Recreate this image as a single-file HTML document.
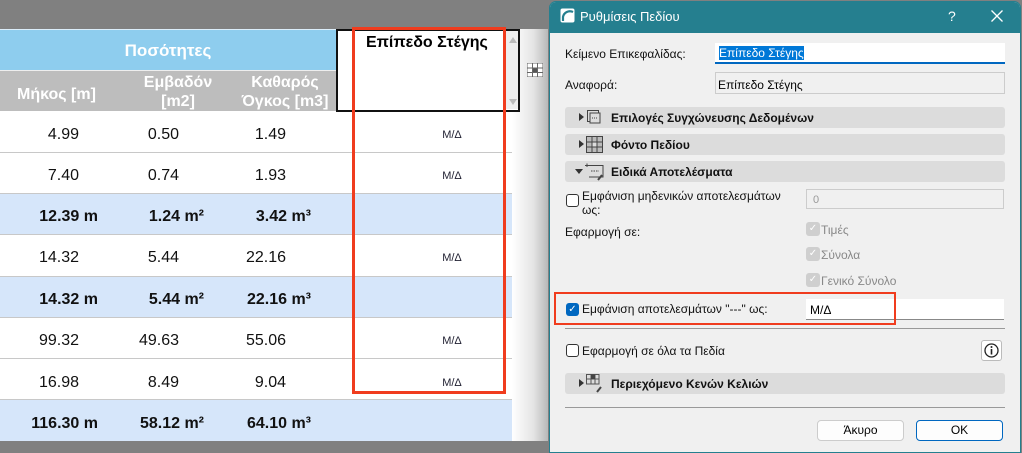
<!DOCTYPE html>
<html><head><meta charset="utf-8"><style>
*{margin:0;padding:0;box-sizing:border-box}
body{width:1022px;height:453px;overflow:hidden;position:relative;background:#808080;font-family:"Liberation Sans",Arial,sans-serif}
.a{position:absolute}
.n{position:absolute;font-size:16px;color:#111;text-align:right}
.b{font-weight:bold}
.row{position:absolute;left:0;width:512px;border-bottom:1px solid #c8c8c8}
.md{position:absolute;left:430px;width:44px;text-align:center;font-size:11px;color:#223}
.dl{font-size:12px;color:#111}
.sec{position:absolute;left:565px;width:440px;height:21px;background:#dcdcdc;border-radius:3px;font-size:12px;font-weight:bold;color:#111}
.sec .t{position:absolute;left:14px;top:6px;width:0;height:0;border-top:4px solid transparent;border-bottom:4px solid transparent;border-left:5px solid #333}
.sec .dn{position:absolute;left:10px;top:8px;border-left:4px solid transparent;border-right:4px solid transparent;border-top:5px solid #333}
.sec span{position:absolute;left:46px;top:4px}
.cb{position:absolute;width:13px;height:13px;border:1px solid #333;border-radius:3px;background:#fff}
.cbd{position:absolute;width:14px;height:14px;border-radius:3px;background:#cfcfcf;color:#fff;font-size:10px;text-align:center;line-height:14px}
.inp{position:absolute;background:#fff;border-bottom:1px solid #888;font-size:12px}
</style></head><body>
<!-- table area -->
<div class="a" style="left:0;top:29px;width:512px;height:412px;background:#fff"></div>
<div class="a" style="left:512px;top:29px;width:36px;height:412px;background:linear-gradient(90deg,#fff,#e4e4e4 60%,#b8b8b8)"></div>
<div class="a" style="left:0;top:29px;width:336px;height:41px;background:#8ecdee;color:#fff;font-weight:bold;font-size:17px;text-align:center;line-height:41px;border-top:1px solid #dceefa">Ποσότητες</div>
<div class="a" style="left:0;top:70px;width:336px;height:41px;background:#bdbdbd;border-top:1px solid #eee"></div>
<div class="a" style="left:17px;top:86px;color:#fff;font-weight:bold;font-size:16px">Μήκος [m]</div>
<div class="a" style="left:138px;top:73px;color:#fff;font-weight:bold;font-size:16px;text-align:center;width:80px;line-height:19px">Εμβαδόν<br>[m2]</div>
<div class="a" style="left:240px;top:73px;color:#fff;font-weight:bold;font-size:16px;text-align:center;width:90px;line-height:19px">Καθαρός<br>Όγκος [m3]</div>
<div class="a" style="left:336px;top:29px;width:184px;height:83px;border:2px solid #111;background:#fff"></div>
<div class="a" style="left:366px;top:34px;font-weight:bold;font-size:16px;color:#000">Επίπεδο Στέγης</div>
<div class="a" style="left:504px;top:31px;width:14px;height:78px;background:#eee"></div>
<div class="a" style="left:509px;top:37px;border-left:4px solid transparent;border-right:4px solid transparent;border-bottom:6px solid #bbb"></div>
<div class="a" style="left:509px;top:99px;border-left:4px solid transparent;border-right:4px solid transparent;border-top:6px solid #bbb"></div>
<svg class="a" style="left:527px;top:63px" width="16" height="14"><rect x="0" y="0" width="16" height="14" fill="#fff" stroke="#666"/><path d="M0 5H16M0 9.5H16M5.5 0V14M10.5 0V14" stroke="#666"/><rect x="6" y="5.5" width="4" height="3.5" fill="#555"/></svg>

<div class="row" style="top:111px;height:42px"></div>
<div class="row" style="top:153px;height:41px"></div>
<div class="row" style="top:194px;height:41px;background:#d6e6fa"></div>
<div class="row" style="top:235px;height:42px"></div>
<div class="row" style="top:277px;height:41px;background:#d6e6fa"></div>
<div class="row" style="top:318px;height:41px"></div>
<div class="row" style="top:359px;height:41px"></div>
<div class="row" style="top:400px;height:41px;background:#d6e6fa;border-bottom:none"></div>

<div class="n" style="right:943px;top:126px">4.99</div><div class="n" style="right:843px;top:126px">0.50</div><div class="n" style="right:736px;top:126px">1.49</div><div class="md" style="top:129px">Μ/Δ</div>
<div class="n" style="right:943px;top:167px">7.40</div><div class="n" style="right:843px;top:167px">0.74</div><div class="n" style="right:736px;top:167px">1.93</div><div class="md" style="top:170px">Μ/Δ</div>
<div class="n b" style="right:924px;top:208px">12.39 m</div><div class="n b" style="right:818px;top:208px">1.24 m²</div><div class="n b" style="right:711px;top:208px">3.42 m³</div>
<div class="n" style="right:943px;top:249px">14.32</div><div class="n" style="right:843px;top:249px">5.44</div><div class="n" style="right:736px;top:249px">22.16</div><div class="md" style="top:252px">Μ/Δ</div>
<div class="n b" style="right:924px;top:291px">14.32 m</div><div class="n b" style="right:818px;top:291px">5.44 m²</div><div class="n b" style="right:711px;top:291px">22.16 m³</div>
<div class="n" style="right:943px;top:332px">99.32</div><div class="n" style="right:843px;top:332px">49.63</div><div class="n" style="right:736px;top:332px">55.06</div><div class="md" style="top:335px">Μ/Δ</div>
<div class="n" style="right:943px;top:374px">16.98</div><div class="n" style="right:843px;top:374px">8.49</div><div class="n" style="right:736px;top:374px">9.04</div><div class="md" style="top:377px">Μ/Δ</div>
<div class="n b" style="right:924px;top:415px">116.30 m</div><div class="n b" style="right:818px;top:415px">58.12 m²</div><div class="n b" style="right:711px;top:415px">64.10 m³</div>
<div class="a" style="left:352px;top:27px;width:154px;height:367px;border:3px solid #f03c1e"></div>

<!-- dialog -->
<div class="a" style="left:549px;top:1px;width:472px;height:452px;background:#f0f0f0;border:1px solid #257f8f;border-radius:7px 7px 0 0;overflow:hidden">
<div class="a" style="left:0;top:0;width:472px;height:31px;background:#257f8f"></div>
</div>
<svg class="a" style="left:560px;top:8px" width="15" height="15"><rect x="0.5" y="0.5" width="14" height="14" rx="2" fill="#fff"/><path d="M3 13V9A7 7 0 0 1 13 4" stroke="#257f8f" stroke-width="2.2" fill="none"/></svg>
<div class="a" style="left:580px;top:9px;font-size:13px;color:#fff">Ρυθμίσεις Πεδίου</div>
<div class="a" style="left:948px;top:8px;font-size:14px;color:#fff">?</div>
<svg class="a" style="left:991px;top:10px" width="12" height="12"><path d="M0.5 0.5L11.5 11.5M11.5 0.5L0.5 11.5" stroke="#fff" stroke-width="1.3"/></svg>

<div class="a dl" style="left:565px;top:47px">Κείμενο Επικεφαλίδας:</div>
<div class="inp" style="left:715px;top:43px;width:290px;height:21px;border-bottom:2px solid #0067c0"><span style="position:absolute;left:4px;top:3px;background:#0078d7;color:#fff">Επίπεδο Στέγης</span></div>
<div class="a dl" style="left:565px;top:78px">Αναφορά:</div>
<div class="a" style="left:715px;top:72px;width:290px;height:22px;background:#f0f0f0;border:1px solid #ccc;font-size:12px;padding:5px 2px">Επίπεδο Στέγης</div>

<div class="sec" style="top:107px"><div class="t"></div><svg class="a" style="left:22px;top:3px" width="14" height="14"><rect x="0.5" y="0.5" width="11" height="11" fill="none" stroke="#444"/><rect x="3" y="3" width="10" height="10" fill="#ddd" stroke="#444"/><path d="M5 8H11" stroke="#444" stroke-dasharray="1 1"/></svg><span>Επιλογές Συγχώνευσης Δεδομένων</span></div>
<div class="sec" style="top:134px"><div class="t"></div><svg class="a" style="left:21px;top:2px" width="17" height="17"><rect x="0.5" y="0.5" width="16" height="16" fill="#bbb" stroke="#444"/><path d="M0 6H17M0 11H17M6 0V17M11 0V17" stroke="#444"/><rect x="6.5" y="6.5" width="4" height="4" fill="#ddd"/></svg><span>Φόντο Πεδίου</span></div>
<div class="sec" style="top:161px"><div class="dn"></div><svg class="a" style="left:20px;top:2px" width="20" height="18"><path d="M2 0.5V4M0 2.5H18V14H4" fill="none" stroke="#444"/><path d="M6 8H14" stroke="#444" stroke-dasharray="1.5 1"/><path d="M13 17L17 12" stroke="#444" stroke-width="2"/></svg><span>Ειδικά Αποτελέσματα</span></div>

<div class="cb" style="left:566px;top:194px"></div>
<div class="a dl" style="left:582px;top:189px;line-height:14px">Εμφάνιση μηδενικών αποτελεσμάτων<br>ως:</div>
<div class="a" style="left:806px;top:189px;width:198px;height:20px;border:1px solid #ccc;background:#f0f0f0;font-size:11px;color:#999;padding:4px 6px">0</div>
<div class="a dl" style="left:565px;top:225px">Εφαρμογή σε:</div>
<div class="cbd" style="left:806px;top:222px">✓</div><div class="a dl" style="left:821px;top:223px;color:#888">Τιμές</div>
<div class="cbd" style="left:806px;top:247px">✓</div><div class="a dl" style="left:821px;top:248px;color:#888">Σύνολα</div>
<div class="cbd" style="left:806px;top:273px">✓</div><div class="a dl" style="left:821px;top:274px;color:#888">Γενικό Σύνολο</div>

<div class="a" style="left:566px;top:303px;width:13px;height:13px;background:#0067c0;border-radius:3px;color:#fff;font-size:10px;text-align:center;line-height:13px">✓</div>
<div class="a dl" style="left:582px;top:302px">Εμφάνιση αποτελεσμάτων "---" ως:</div>
<div class="inp" style="left:806px;top:299px;width:198px;height:21px"><span style="position:absolute;left:4px;top:4px">Μ/Δ</span></div>
<div class="a" style="left:554px;top:292px;width:342px;height:33px;border:2px solid #f03c1e"></div>
<div class="a" style="left:565px;top:328px;width:440px;height:1px;background:#999"></div>

<div class="cb" style="left:566px;top:344px"></div>
<div class="a dl" style="left:582px;top:344px">Εφαρμογή σε όλα τα Πεδία</div>
<div class="a" style="left:981px;top:340px;width:21px;height:21px;border:1px solid #bbb;border-radius:3px;background:#fff"></div>
<svg class="a" style="left:984px;top:343px" width="15" height="15"><circle cx="7.5" cy="7.5" r="6.5" fill="none" stroke="#222" stroke-width="1.3"/><path d="M7.5 6V11.5" stroke="#222" stroke-width="1.6"/><circle cx="7.5" cy="4" r="1" fill="#222"/></svg>

<div class="sec" style="top:373px"><div class="t"></div><svg class="a" style="left:21px;top:1px" width="18" height="20"><path d="M0.5 0.5H13V10H0.5Z M0.5 5H13 M5 0.5V10 M9 0.5V10" fill="none" stroke="#555"/><rect x="5" y="0.5" width="4" height="4.5" fill="#444"/><path d="M11 18L15 13" stroke="#444" stroke-width="2"/></svg><span>Περιεχόμενο Κενών Κελιών</span></div>
<div class="a" style="left:565px;top:407px;width:440px;height:1px;background:#999"></div>

<div class="a" style="left:817px;top:420px;width:87px;height:21px;background:#fdfdfd;border:1px solid #ccc;border-radius:4px;font-size:12px;text-align:center;line-height:19px">Άκυρο</div>
<div class="a" style="left:916px;top:420px;width:87px;height:21px;background:#fdfdfd;border:1px solid #0067c0;border-radius:4px;font-size:12px;text-align:center;line-height:19px">OK</div>
</body></html>
